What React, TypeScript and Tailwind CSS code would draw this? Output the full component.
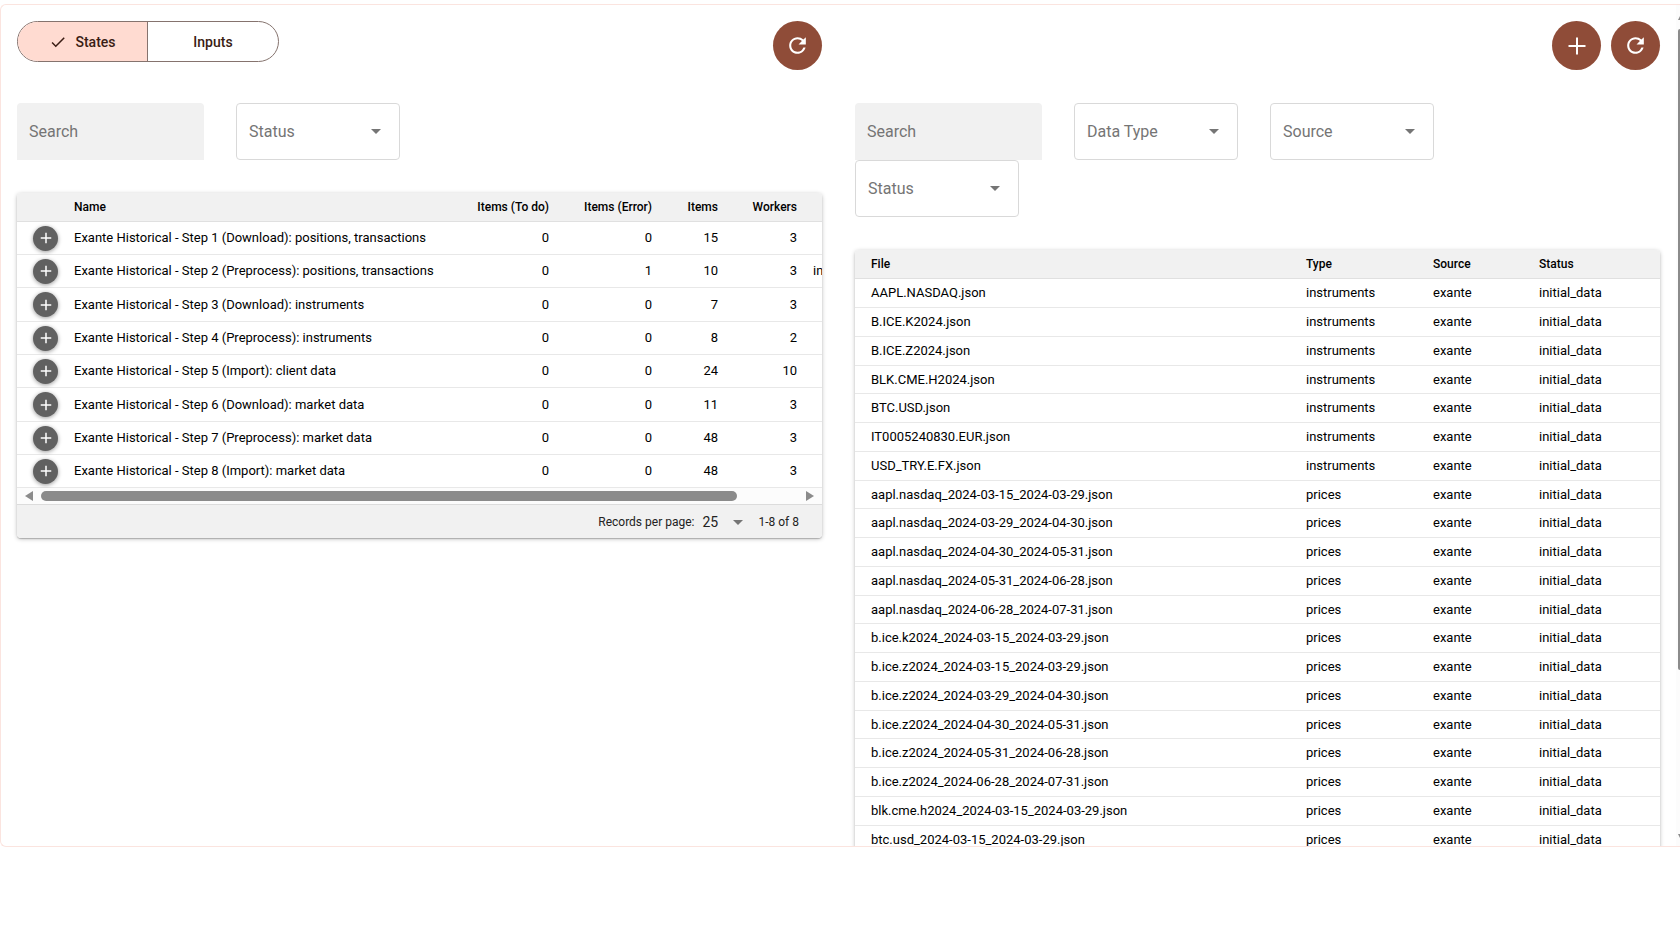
import { ReactNode } from "react";
import { MdAdd, MdArrowDropDown, MdCheck, MdRefresh } from "react-icons/md";

interface StateRow {
  name: string;
  todo: number;
  error: number;
  items: number;
  workers: number;
  message?: string;
}

const STATES: StateRow[] = [
  { name: "Exante Historical - Step 1 (Download): positions, transactions", todo: 0, error: 0, items: 15, workers: 3 },
  { name: "Exante Historical - Step 2 (Preprocess): positions, transactions", todo: 0, error: 1, items: 10, workers: 3, message: "in" },
  { name: "Exante Historical - Step 3 (Download): instruments", todo: 0, error: 0, items: 7, workers: 3 },
  { name: "Exante Historical - Step 4 (Preprocess): instruments", todo: 0, error: 0, items: 8, workers: 2 },
  { name: "Exante Historical - Step 5 (Import): client data", todo: 0, error: 0, items: 24, workers: 10 },
  { name: "Exante Historical - Step 6 (Download): market data", todo: 0, error: 0, items: 11, workers: 3 },
  { name: "Exante Historical - Step 7 (Preprocess): market data", todo: 0, error: 0, items: 48, workers: 3 },
  { name: "Exante Historical - Step 8 (Import): market data", todo: 0, error: 0, items: 48, workers: 3 },
];

const INSTRUMENT_FILES = [
  "AAPL.NASDAQ.json",
  "B.ICE.K2024.json",
  "B.ICE.Z2024.json",
  "BLK.CME.H2024.json",
  "BTC.USD.json",
  "IT0005240830.EUR.json",
  "USD_TRY.E.FX.json",
];

const PRICE_FILES = [
  "aapl.nasdaq_2024-03-15_2024-03-29.json",
  "aapl.nasdaq_2024-03-29_2024-04-30.json",
  "aapl.nasdaq_2024-04-30_2024-05-31.json",
  "aapl.nasdaq_2024-05-31_2024-06-28.json",
  "aapl.nasdaq_2024-06-28_2024-07-31.json",
  "b.ice.k2024_2024-03-15_2024-03-29.json",
  "b.ice.z2024_2024-03-15_2024-03-29.json",
  "b.ice.z2024_2024-03-29_2024-04-30.json",
  "b.ice.z2024_2024-04-30_2024-05-31.json",
  "b.ice.z2024_2024-05-31_2024-06-28.json",
  "b.ice.z2024_2024-06-28_2024-07-31.json",
  "blk.cme.h2024_2024-03-15_2024-03-29.json",
  "btc.usd_2024-03-15_2024-03-29.json",
];

const FILES = [
  ...INSTRUMENT_FILES.map((file) => ({ file, type: "instruments" })),
  ...PRICE_FILES.map((file) => ({ file, type: "prices" })),
];

function RoundButton({ label, children }: { label: string; children: ReactNode }) {
  return (
    <button
      type="button"
      aria-label={label}
      className="flex size-[49px] items-center justify-center rounded-full bg-[#8f4c38] text-white"
    >
      {children}
    </button>
  );
}

function SearchField() {
  return (
    <div className="pr-8">
      <input
        type="search"
        aria-label="Search"
        placeholder="Search"
        className="h-[57px] w-[187px] rounded-t bg-[#f1f1f1] px-3 text-base outline-none placeholder:text-[#757575]"
      />
    </div>
  );
}

function FilterSelect({ label }: { label: string }) {
  return (
    <div className="pr-8">
      <div className="relative w-[164px]">
        <select
          aria-label={label}
          className="h-[57px] w-full appearance-none rounded border border-[#d9d9d9] bg-white px-3 text-base text-[#757575]"
        >
          <option>{label}</option>
        </select>
        <MdArrowDropDown className="pointer-events-none absolute top-4 right-3 size-6 text-[#757575]" />
      </div>
    </div>
  );
}

function StatesPanel() {
  return (
    <section className="min-w-0">
      <div className="mb-[33px] flex items-start justify-between">
        <div className="flex h-[41px] w-[262px] overflow-hidden rounded-full border border-[#85736e] text-sm font-medium text-[#3a1d14]">
          <button
            type="button"
            aria-pressed="true"
            className="flex w-[130px] items-center justify-center gap-2 border-r border-[#85736e] bg-[#ffdbd1]"
          >
            <MdCheck className="size-[18px]" />
            States
          </button>
          <button type="button" aria-pressed="false" className="flex-1">
            Inputs
          </button>
        </div>
        <RoundButton label="Refresh states">
          <MdRefresh className="size-[25px]" />
        </RoundButton>
      </div>

      <div className="mb-[33px] flex flex-wrap">
        <SearchField />
        <FilterSelect label="Status" />
      </div>

      <div className="overflow-hidden rounded bg-white shadow-[0_1px_4px_rgba(0,0,0,0.25),0_1px_1px_rgba(0,0,0,0.2)]">
        <table className="w-full table-fixed border-separate border-spacing-0 text-right text-[13px]">
          <colgroup>
            <col className="w-[49px]" />
            <col />
            <col className="w-[98px]" />
            <col className="w-[103px]" />
            <col className="w-[66px]" />
            <col className="w-[79px]" />
            <col className="w-[17px]" />
          </colgroup>
          <thead className="bg-[#f1f1f1] text-xs">
            <tr className="h-[29px] *:border-b *:border-[#e0e0e0] *:px-2 *:font-medium *:whitespace-nowrap">
              <th />
              <th className="text-left">Name</th>
              <th>Items (To do)</th>
              <th>Items (Error)</th>
              <th>Items</th>
              <th>Workers</th>
              <th />
            </tr>
          </thead>
          <tbody>
            {STATES.map((row) => (
              <tr
                key={row.name}
                className="h-[33px] *:border-b *:border-[#e8e8e8] *:px-2 *:whitespace-nowrap nth-[3n]:h-[34px]"
              >
                <td>
                  <button
                    type="button"
                    aria-label={`Expand ${row.name}`}
                    className="ml-2 flex size-[25px] items-center justify-center rounded-full bg-[#616161] text-white shadow-[0_1px_4px_rgba(0,0,0,0.4)]"
                  >
                    <MdAdd className="size-[18px]" />
                  </button>
                </td>
                <td className="text-left">{row.name}</td>
                <td>{row.todo}</td>
                <td>{row.error}</td>
                <td>{row.items}</td>
                <td>{row.workers}</td>
                <td className="overflow-hidden text-left">{row.message}</td>
              </tr>
            ))}
          </tbody>
        </table>

        <div className="flex h-4 items-center bg-[#fcfcfc] px-2 text-[#8b8b8b]">
          <svg viewBox="0 0 8 10" className="h-[10px] w-2 shrink-0" fill="currentColor">
            <path d="M8 0v10L0 5z" />
          </svg>
          <div className="mx-2 flex-1">
            <div className="h-[10px] w-[92%] rounded-full bg-current" />
          </div>
          <svg viewBox="0 0 8 10" className="h-[10px] w-2 shrink-0" fill="currentColor">
            <path d="M0 0v10l8-5z" />
          </svg>
        </div>

        <div className="flex h-[34px] items-center justify-end border-t border-[#dcdcdc] bg-[#f1f1f1] pr-[23px] text-xs text-[#222]">
          <label htmlFor="page-size">Records per page:</label>
          <div className="relative mx-2 flex w-12 items-center">
            <select id="page-size" className="h-6 w-full appearance-none text-sm">
              <option>25</option>
            </select>
            <MdArrowDropDown className="pointer-events-none absolute right-0 size-6 text-[#757575]" />
          </div>
          <span>1-8 of 8</span>
        </div>
      </div>
    </section>
  );
}

function FilesPanel() {
  return (
    <section className="min-w-0">
      <div className="mb-[33px] flex justify-end gap-[10px]">
        <RoundButton label="Add file">
          <svg viewBox="0 0 24 24" className="size-6" fill="none" stroke="currentColor" strokeWidth="2">
            <path d="M12 3.500v17M3.500 12h17" />
          </svg>
        </RoundButton>
        <RoundButton label="Refresh files">
          <MdRefresh className="size-[25px]" />
        </RoundButton>
      </div>

      <div className="mb-[33px] flex flex-wrap">
        <SearchField />
        <FilterSelect label="Data Type" />
        <FilterSelect label="Source" />
        <FilterSelect label="Status" />
      </div>

      <div className="overflow-hidden rounded bg-white shadow-[0_1px_4px_rgba(0,0,0,0.25),0_1px_1px_rgba(0,0,0,0.2)]">
        <table className="w-full table-fixed border-separate border-spacing-0 text-left text-[13px]">
          <colgroup>
            <col />
            <col className="w-[127px]" />
            <col className="w-[106px]" />
            <col className="w-[129px]" />
          </colgroup>
          <thead className="bg-[#f1f1f1] text-xs">
            <tr className="h-[29px] *:border-b *:border-[#e0e0e0] *:px-2 *:font-medium *:first:pl-4">
              <th>File</th>
              <th>Type</th>
              <th>Source</th>
              <th>Status</th>
            </tr>
          </thead>
          <tbody>
            {FILES.map(({ file, type }) => (
              <tr
                key={file}
                className="h-[29px] *:border-b *:border-[#e8e8e8] *:px-2 *:first:pl-4 nth-[4n]:h-7"
              >
                <td>{file}</td>
                <td>{type}</td>
                <td>exante</td>
                <td>initial_data</td>
              </tr>
            ))}
          </tbody>
        </table>
      </div>
    </section>
  );
}

export default function App() {
  return (
    <div className="h-screen overflow-hidden bg-white pt-1 font-['Roboto',sans-serif] text-black">
      <main className="flex h-[calc(100vh-84px)] overflow-hidden rounded-l-md border border-r-0 border-[#fbe4df]">
        <div className="grid flex-1 grid-cols-2 items-start gap-[33px] pt-4 pr-4 pl-4">
          <StatesPanel />
          <FilesPanel />
        </div>
        {/* edge of the page scrollbar */}
        <div className="flex w-1 flex-col items-end bg-[#fcfcfc] pt-[11px] pb-2 text-[#8b8b8b]">
          <svg viewBox="0 0 2 4" className="h-1 w-[2px]" fill="currentColor">
            <path d="M2 0v4H0z" />
          </svg>
          <div className="mt-[9px] h-[78%] w-[2px] rounded-l-full bg-current" />
          <svg viewBox="0 0 2 4" className="mt-auto h-1 w-[2px]" fill="currentColor">
            <path d="M0 0h2v4z" />
          </svg>
        </div>
      </main>
    </div>
  );
}
